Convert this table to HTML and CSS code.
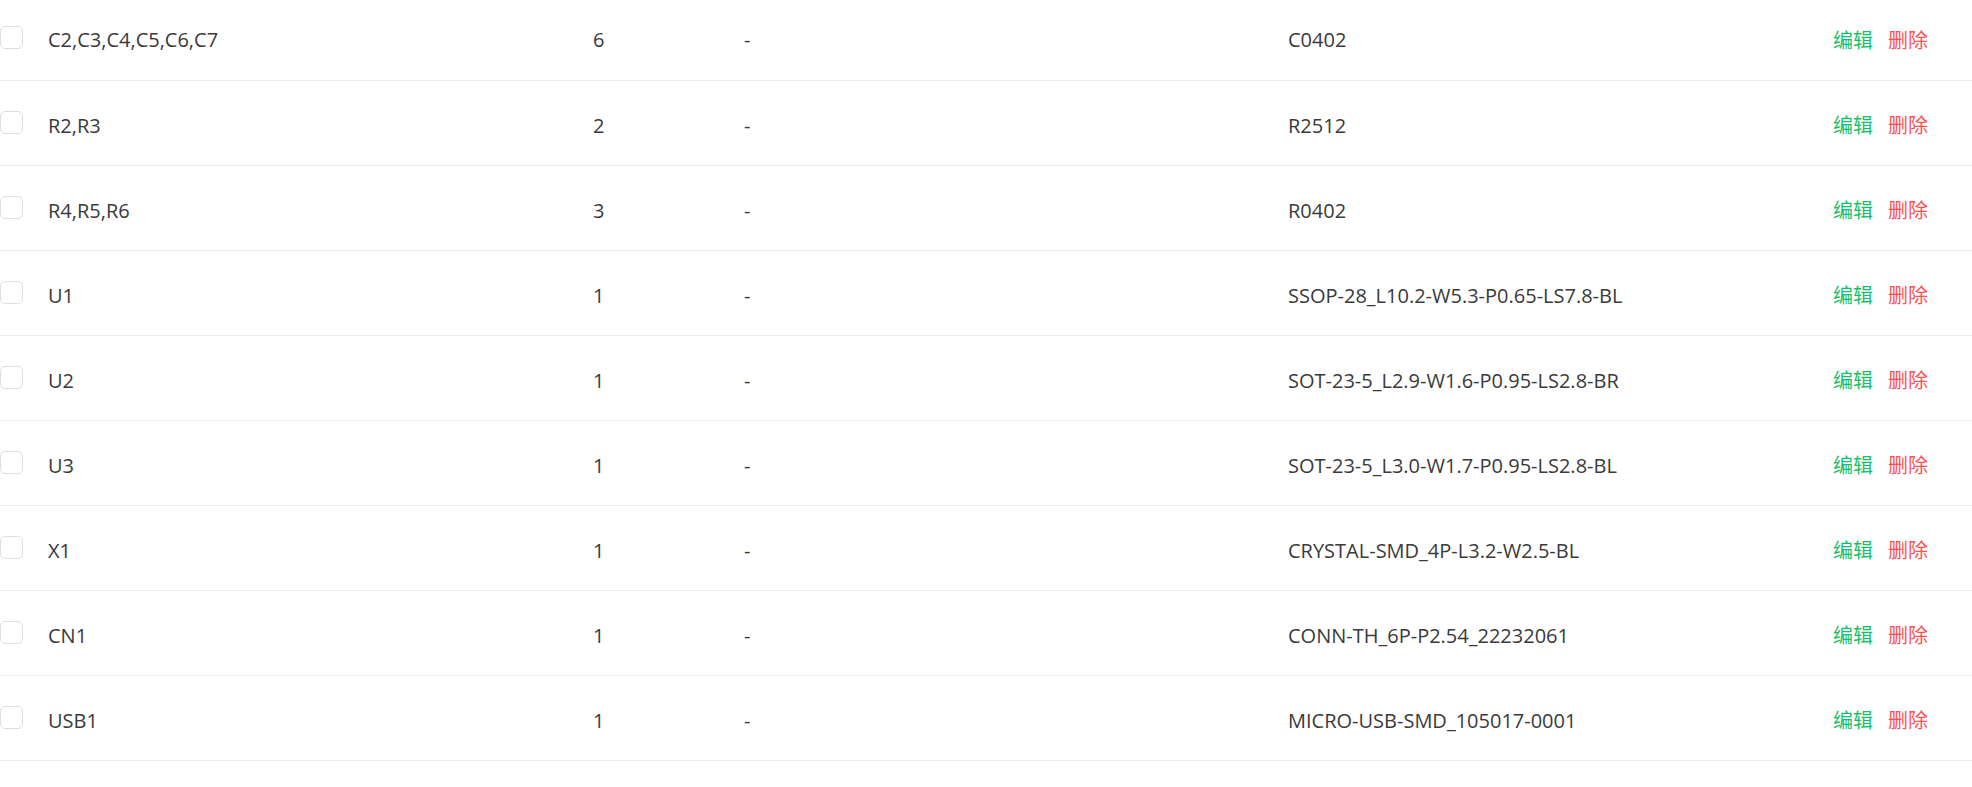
FILE: index.html
```html
<!DOCTYPE html>
<html lang="zh">
<head>
<meta charset="utf-8">
<title>BOM</title>
<link rel="stylesheet" href="styles.css">
</head>
<body>
<div class="wrap">
<table class="bom">
<colgroup>
<col class="c-check"><col class="c-des"><col class="c-qty"><col class="c-val"><col class="c-fp"><col class="c-act">
</colgroup>
<tbody>
<tr><td class="chk"><span class="box"></span></td><td>C2,C3,C4,C5,C6,C7</td><td>6</td><td>-</td><td>C0402</td><td class="act"><a class="edit">编辑</a><a class="del">删除</a></td></tr>
<tr><td class="chk"><span class="box"></span></td><td>R2,R3</td><td>2</td><td>-</td><td>R2512</td><td class="act"><a class="edit">编辑</a><a class="del">删除</a></td></tr>
<tr><td class="chk"><span class="box"></span></td><td>R4,R5,R6</td><td>3</td><td>-</td><td>R0402</td><td class="act"><a class="edit">编辑</a><a class="del">删除</a></td></tr>
<tr><td class="chk"><span class="box"></span></td><td>U1</td><td>1</td><td>-</td><td>SSOP-28_L10.2-W5.3-P0.65-LS7.8-BL</td><td class="act"><a class="edit">编辑</a><a class="del">删除</a></td></tr>
<tr><td class="chk"><span class="box"></span></td><td>U2</td><td>1</td><td>-</td><td>SOT-23-5_L2.9-W1.6-P0.95-LS2.8-BR</td><td class="act"><a class="edit">编辑</a><a class="del">删除</a></td></tr>
<tr><td class="chk"><span class="box"></span></td><td>U3</td><td>1</td><td>-</td><td>SOT-23-5_L3.0-W1.7-P0.95-LS2.8-BL</td><td class="act"><a class="edit">编辑</a><a class="del">删除</a></td></tr>
<tr><td class="chk"><span class="box"></span></td><td>X1</td><td>1</td><td>-</td><td>CRYSTAL-SMD_4P-L3.2-W2.5-BL</td><td class="act"><a class="edit">编辑</a><a class="del">删除</a></td></tr>
<tr><td class="chk"><span class="box"></span></td><td>CN1</td><td>1</td><td>-</td><td>CONN-TH_6P-P2.54_22232061</td><td class="act"><a class="edit">编辑</a><a class="del">删除</a></td></tr>
<tr><td class="chk"><span class="box"></span></td><td>USB1</td><td>1</td><td>-</td><td>MICRO-USB-SMD_105017-0001</td><td class="act"><a class="edit">编辑</a><a class="del">删除</a></td></tr>
</tbody>
</table>
</div>
</body>
</html>
```
FILE: styles.css
```css
html, body {
  margin: 0;
  padding: 0;
  background: #ffffff;
}
body {
  font-family: "Open Sans", "Noto Sans CJK SC", sans-serif;
  font-size: 20px;
  color: #3a3a3a;
}
.wrap {
  margin-top: -5px;
}
.bom {
  width: 100%;
  table-layout: fixed;
  border-collapse: collapse;
}
.c-check { width: 48px; }
.c-des { width: 545px; }
.c-qty { width: 151px; }
.c-val { width: 544px; }
.c-fp { width: 545px; }
.c-act { width: 139px; }
.bom td {
  height: 85px;
  padding: 6px 0 0 0;
  box-sizing: border-box;
  line-height: 24px;
  vertical-align: middle;
  border-bottom: 1px solid #ebebeb;
  white-space: nowrap;
}
.bom td.chk {
  padding-top: 0;
}
.box {
  display: block;
  width: 23px;
  height: 23px;
  box-sizing: border-box;
  border: 1px solid #dcdee2;
  border-radius: 5px;
  background: #fff;
}
.act a {
  font-family: "Noto Sans CJK SC", sans-serif;
  font-size: 20px;
  cursor: pointer;
}
.edit {
  color: #19be6b;
  margin-right: 15px;
}
.del {
  color: #ff5151;
}
```
